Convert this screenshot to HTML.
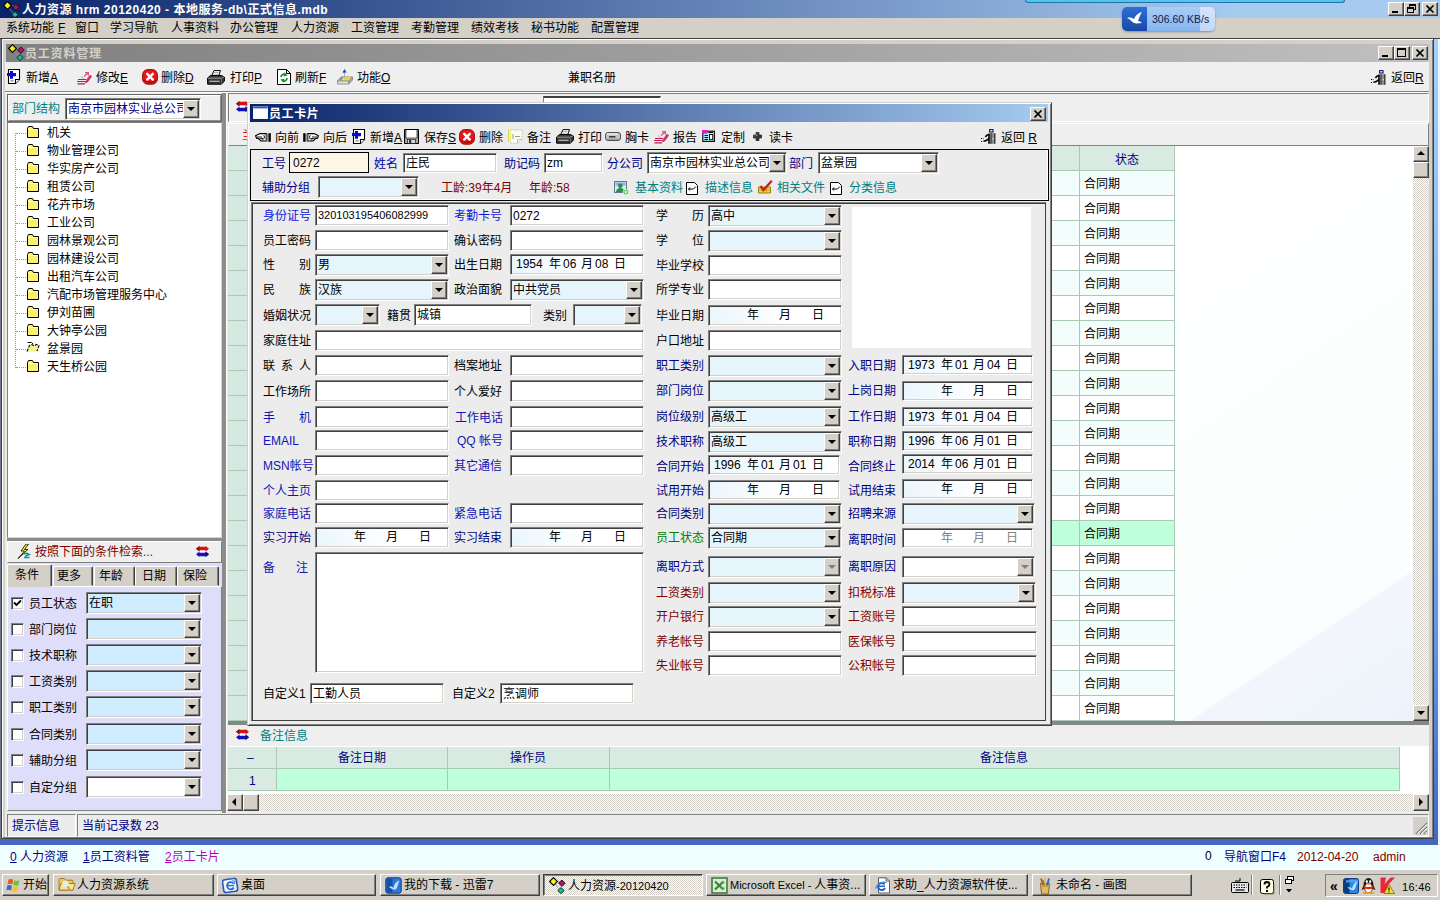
<!DOCTYPE html>
<html lang="zh-CN"><head><meta charset="utf-8"><title>人力资源 hrm</title>
<style>
*{box-sizing:border-box}
html,body{margin:0;padding:0}
body{width:1440px;height:900px;overflow:hidden;position:relative;background:#d4d0c8;font:12px/16px "Liberation Sans","Noto Sans CJK SC",sans-serif;color:#000}
div,span.t,span.dt,i,svg{position:absolute}
.t{white-space:nowrap;line-height:16px;height:16px}
.sk{border:1px solid;border-color:#808080 #fff #fff #808080;box-shadow:inset 1px 1px 0 #404040,inset -1px -1px 0 #d4d0c8;overflow:hidden}
.sk1{border:1px solid;border-color:#808080 #fff #fff #808080}
.rs{border:1px solid;border-color:#fff #404040 #404040 #fff;box-shadow:inset -1px -1px 0 #808080,inset 1px 1px 0 #d4d0c8;background:#d4d0c8}
.rs1{border:1px solid;border-color:#fff #808080 #808080 #fff}
.v{position:absolute;left:2px;top:0;height:100%;display:flex;align-items:center;white-space:nowrap}
.dt{top:0;line-height:18px;white-space:nowrap}
.cb{right:1px;top:1px;border:1px solid;border-color:#fff #404040 #404040 #fff;box-shadow:inset -1px -1px 0 #808080,inset 1px 1px 0 #d4d0c8;background:#d4d0c8}
.ar{left:50%;top:50%;margin:-2px 0 0 -4px;width:0;height:0;border:4px solid transparent;border-bottom:0;border-top:4px solid #000}
.n{font-size:11px}
u{text-decoration:underline}
.wb{border:1px solid;border-color:#fff #404040 #404040 #fff;box-shadow:inset -1px -1px 0 #808080;background:#d4d0c8}
.g{border-right:1px solid #a9c9b4;border-bottom:1px solid #a9c9b4}
.tb{border:1px solid;border-color:#fff #404040 #404040 #fff;box-shadow:inset -1px -1px 0 #808080;background:#d4d0c8;white-space:nowrap;overflow:hidden;line-height:20px;font-size:12px}
.hatch{background-color:#fff;background-image:linear-gradient(45deg,#d4d0c8 25%,transparent 25%,transparent 75%,#d4d0c8 75%),linear-gradient(45deg,#d4d0c8 25%,transparent 25%,transparent 75%,#d4d0c8 75%);background-size:2px 2px;background-position:0 0,1px 1px}
</style></head>
<body>
<div style="left:0px;top:0px;width:1440px;height:18px;background:linear-gradient(90deg,#0a246a 0%,#a6caf0 86%,#a6caf0 100%);"></div>
<svg style="left:3px;top:1px" width="17" height="17" viewBox="0 0 17 17"><path d="M5 6 L10 12 M9 4 L11.5 5.5" stroke="#8090b0" stroke-width=".8" fill="none"/><path d="M0.6 4.5 L4.5 0.6 L8.4 4.5 L4.5 8.4Z" fill="#f4f420" stroke="#000" stroke-width="1.1"/><path d="M9.6 6.2 L13 3 L16.2 6.2 L13 9.4Z" fill="#a81860" stroke="#300018" stroke-width=".9"/><path d="M8.8 13.6 L12 10.6 L15.2 13.6 L12 16.6Z" fill="#20b898" stroke="#002818" stroke-width=".9"/></svg>
<span class="t" style="left:22px;top:2px;color:#fff;font-weight:bold;font-size:12px;letter-spacing:0.5px">人力资源 hrm 20120420 - 本地服务-db\正式信息.mdb</span>
<div style="left:1025px;top:0px;width:320px;height:3px;background:#5cc0ee;border-bottom:1px solid #1878a8;border-left:1px solid #1878a8;border-right:1px solid #1878a8;border-radius:0 0 3px 3px"></div>
<div class="wb" style="left:1388px;top:2px;width:16px;height:14px;"><div style="left:3px;top:8px;width:6px;height:2px;background:#000"></div></div>
<div class="wb" style="left:1404px;top:2px;width:16px;height:14px;"><div style="left:4px;top:1px;width:7px;height:6px;border:1px solid #000;border-top-width:2px"></div><div style="left:2px;top:4px;width:7px;height:6px;border:1px solid #000;border-top-width:2px;background:#d4d0c8"></div></div>
<div class="wb" style="left:1422px;top:2px;width:16px;height:14px;"><svg style="left:3px;top:2px" width="9" height="8" viewBox="0 0 9 8"><path d="M0.5 0.5 L7.5 7.5 M7.5 0.5 L0.5 7.5" stroke="#000" stroke-width="1.6"/></svg></div>
<div style="left:0px;top:18px;width:1440px;height:20px;background:#d4d0c8;"></div>
<span class="t" style="left:6px;top:20px;">系统功能<u style="margin-left:4px">F</u></span>
<span class="t" style="left:75px;top:20px;">窗口</span>
<span class="t" style="left:110px;top:20px;">学习导航</span>
<span class="t" style="left:171px;top:20px;">人事资料</span>
<span class="t" style="left:230px;top:20px;">办公管理</span>
<span class="t" style="left:291px;top:20px;">人力资源</span>
<span class="t" style="left:351px;top:20px;">工资管理</span>
<span class="t" style="left:411px;top:20px;">考勤管理</span>
<span class="t" style="left:471px;top:20px;">绩效考核</span>
<span class="t" style="left:531px;top:20px;">秘书功能</span>
<span class="t" style="left:591px;top:20px;">配置管理</span>
<div style="left:1122px;top:7px;width:93px;height:24px;border-radius:5px;background:linear-gradient(180deg,#b9d6f7,#9cc4f3);box-shadow:0 1px 2px rgba(60,80,120,.5);overflow:hidden"><div style="left:0px;top:0px;width:25px;height:24px;background:linear-gradient(180deg,#2d6fd6,#1848a8)"><svg style="left:4px;top:4px" width="18" height="16" viewBox="0 0 18 16"><path d="M1 7 C4 6 6 7 8 8 C9 5 12 2 16 1 C14 4 13 7 12 10 C14 10 15 11 16 12 C13 12 10 13 8 12 C6 11 4 8 1 7Z" fill="#fff"/></svg></div><div style="left:25px;top:0px;width:53px;height:24px;background:linear-gradient(180deg,#a9cdf6,#86b5ee)"></div><div style="left:78px;top:0px;width:15px;height:24px;background:linear-gradient(180deg,#d6e4f9,#c3d8f6)"></div><span class="t" style="left:30px;top:4px;font-size:10.5px;color:#102050;letter-spacing:0">306.60 KB/s</span></div>
<div style="left:0px;top:38px;width:1440px;height:807px;background:linear-gradient(180deg,#a6d0f8 0%,#88b6f0 40%,#6494e2 75%,#4468c0 100%);"></div>
<div style="left:1438px;top:38px;width:2px;height:807px;background:#e8f4ff"></div>
<div style="left:1px;top:38px;width:1433px;height:801px;background:#d4d0c8;border:1px solid;border-color:#d4d0c8 #404040 #404040 #d4d0c8;box-shadow:inset 1px 1px 0 #fff,inset -1px -1px 0 #808080"></div>
<div style="left:0px;top:38px;width:1440px;height:1px;background:#404040"></div>
<div style="left:0px;top:39px;width:1px;height:800px;background:#70788c"></div>
<div style="left:1px;top:39px;width:1px;height:800px;background:#404040"></div>
<div style="left:6px;top:44px;width:1423px;height:18px;background:linear-gradient(90deg,#808080,#c0c0c0);"></div>
<svg style="left:8px;top:44px" width="17" height="17" viewBox="0 0 17 17"><path d="M5 6 L10 12 M9 4 L11.5 5.5" stroke="#8090b0" stroke-width=".8" fill="none"/><path d="M0.6 4.5 L4.5 0.6 L8.4 4.5 L4.5 8.4Z" fill="#f4f420" stroke="#000" stroke-width="1.1"/><path d="M9.6 6.2 L13 3 L16.2 6.2 L13 9.4Z" fill="#a81860" stroke="#300018" stroke-width=".9"/><path d="M8.8 13.6 L12 10.6 L15.2 13.6 L12 16.6Z" fill="#20b898" stroke="#002818" stroke-width=".9"/></svg>
<span class="t" style="left:25px;top:46px;color:#d4d0c8;font-weight:bold;font-size:12px;letter-spacing:0.8px">员工资料管理</span>
<div class="wb" style="left:1378px;top:46px;width:16px;height:14px;"><div style="left:3px;top:8px;width:6px;height:2px;background:#000"></div></div>
<div class="wb" style="left:1394px;top:46px;width:16px;height:14px;"><div style="left:2px;top:1px;width:9px;height:9px;border:1px solid #000;border-top-width:2px"></div></div>
<div class="wb" style="left:1412px;top:46px;width:16px;height:14px;"><svg style="left:3px;top:2px" width="9" height="8" viewBox="0 0 9 8"><path d="M0.5 0.5 L7.5 7.5 M7.5 0.5 L0.5 7.5" stroke="#000" stroke-width="1.6"/></svg></div>
<div style="left:5px;top:62px;width:1424px;height:774px;background:#ececec;"></div>
<div style="left:5px;top:62px;width:1424px;height:30px;background:#efefef;border-bottom:1px solid #808080;"></div>
<div style="left:5px;top:92px;width:1424px;height:1px;background:#fff"></div>
<svg style="left:7px;top:69px" width="14" height="16" viewBox="0 0 14 16"><path d="M1.5 0.5 H12.5 V10.5 L8.5 14.5 H1.5Z" fill="#fff" stroke="#000" stroke-width="1.1"/><path d="M8.5 14.5 V10.5 H12.5" fill="#fff" stroke="#000" stroke-width="1.1"/><rect x="3.5" y="11" width="3" height="1.5" fill="#88a878"/><path d="M3 2 H6 V4 H9 V7 H6 V9.7 H3 V7 H0 V4 H3Z" fill="#0808d8"/><path d="M6 7 H8.5 V8 H6Z" fill="#a8b0c8"/></svg>
<span class="t" style="left:26px;top:70px;">新增<u>A</u></span>
<svg style="left:77px;top:71px" width="15" height="14" viewBox="0 0 15 14"><path d="M1 8.5 H9 M0 10.5 H8.5 M0.5 12.8 H8" stroke="#c01848" stroke-width="1.2"/><path d="M8.5 12 L9.5 9 L13 4.2 L14.6 5.4 L11 10.5Z" fill="#e03868" stroke="#a01040" stroke-width=".6"/><path d="M8 1 H12 V4.6 H10.6 V3 L7.6 6 L6.6 5 L9.6 2.2 H8Z" fill="#e85080"/><path d="M4 5.5 L6.5 7.5" stroke="#e890a8" stroke-width="1"/></svg>
<span class="t" style="left:96px;top:70px;">修改<u>E</u></span>
<svg style="left:142px;top:69px" width="16" height="16" viewBox="0 0 16 16"><rect x="0.6" y="0.6" width="14.8" height="14.6" rx="5.2" fill="#e81818" stroke="#a00808" stroke-width="1"/><path d="M1.5 10 Q8 15.5 14.5 10 L14 12 Q8 16.5 2 12Z" fill="#b00808"/><path d="M5.2 4.8 L10.8 10.6 M10.8 4.8 L5.2 10.6" stroke="#fff" stroke-width="2.4" stroke-linecap="round"/></svg>
<span class="t" style="left:161px;top:70px;">删除<u>D</u></span>
<svg style="left:207px;top:70px" width="18" height="15" viewBox="0 0 18 15"><path d="M4.5 6 L7 0.6 H13.5 L11.5 6Z" fill="#fff" stroke="#000" stroke-width="1"/><path d="M7 2.5 H11.5 M6.3 4.2 H10.8" stroke="#909090" stroke-width=".7"/><path d="M0.6 8 L3.5 5.5 H14.5 L17.4 7 V11 L14.5 14.2 H0.6Z" fill="#383838" stroke="#000" stroke-width="1"/><path d="M1 8.2 H14.4 L17 6.8" fill="none" stroke="#a8a8a8" stroke-width=".9"/><path d="M2.5 11.3 H12.5" stroke="#b8b8b8" stroke-width="1.2"/><path d="M14.5 8.5 V14" stroke="#707070" stroke-width=".8"/></svg>
<span class="t" style="left:230px;top:70px;">打印<u>P</u></span>
<svg style="left:277px;top:69px" width="14" height="16" viewBox="0 0 14 16"><path d="M0.5 0.5 H9.5 L13.5 4.5 V15.5 H0.5Z" fill="#fff" stroke="#000"/><path d="M9.5 0.5 V4.5 H13.5" fill="none" stroke="#000"/><path d="M4 8 A3 3 0 0 1 8.8 5.8" fill="none" stroke="#109028" stroke-width="1.7"/><path d="M7.4 3.4 L10.6 6.6 L6.6 7.4Z" fill="#109028"/><path d="M10 9 A3 3 0 0 1 5.2 11.4" fill="none" stroke="#109028" stroke-width="1.7"/><path d="M6.6 13.8 L3.4 10.6 L7.4 9.8Z" fill="#109028"/></svg>
<span class="t" style="left:295px;top:70px;">刷新<u>F</u></span>
<svg style="left:337px;top:69px" width="16" height="16" viewBox="0 0 16 16"><path d="M7.5 0 L9.5 3.6 H5.5Z" fill="#2040c0"/><path d="M6.4 3 H8.6" stroke="#2040c0" stroke-width="1"/><path d="M7.5 4.5 V7.5" stroke="#5070d0" stroke-width="1" stroke-dasharray="1 1"/><path d="M0.5 12 L4 8 H15.5 L12 12Z" fill="#f4f090" stroke="#707070" stroke-width=".8"/><path d="M8 8.3 L6 11.7 H11.5 L14.5 8.3Z" fill="#f0d830"/><path d="M2 11 L4.5 8.6 H7 L4.5 11Z" fill="#7088d0"/><path d="M0.5 12 H12 V15 H0.5Z" fill="#e0e0e8" stroke="#808080" stroke-width=".8"/><path d="M12 12 L15.5 8 V11 L12 15Z" fill="#b0b0b8" stroke="#808080" stroke-width=".8"/></svg>
<span class="t" style="left:357px;top:70px;">功能<u>O</u></span>
<span class="t" style="left:568px;top:70px;">兼职名册</span>
<svg style="left:1371px;top:70px" width="15" height="15" viewBox="0 0 15 15"><rect x="9.8" y="4.2" width="4.2" height="10.6" fill="#8c8c8c"/><path d="M9.9 4.2 V14.8 M13.9 4.2 V14.8" stroke="#000" stroke-width=".9"/><rect x="11.6" y="9" width="1" height="1.4" fill="#fff"/><rect x="8.6" y="0.6" width="3.4" height="2.4" fill="#fff" stroke="#101070" stroke-width="1.1"/><path d="M8 4.6 V9.2 L6.2 11 M8 9.2 V14.8 M8 5.6 L5.8 6.2 L4.4 8 M6.2 11 L4 12 L2.4 12" stroke="#000" stroke-width="1.6" fill="none" stroke-linejoin="round"/><path d="M0 9.5 H2.4 M0 12.5 H1.4" stroke="#000" stroke-width="1" stroke-dasharray="1 .8"/></svg>
<span class="t" style="left:1391px;top:70px;">返回<u>R</u></span>
<div class="sk1" style="left:7px;top:94px;width:215px;height:28px;background:#efefef;border-color:#808080 #fff #fff #808080;box-shadow:inset 1px 1px 0 #fff, 0 0 0 0 #000"></div>
<div style="left:7px;top:94px;width:215px;height:28px;border:1px solid #686868;"></div>
<div style="left:8px;top:95px;width:213px;height:26px;border:1px solid #fff;border-right-color:#909090;border-bottom-color:#909090"></div>
<span class="t" style="left:12px;top:101px;color:#008080;">部门结构</span>
<div class="sk" style="left:65px;top:98px;width:136px;height:22px;background:#fff;"><span class="v"><span style="color:#000080">南京市园林实业总公司</span></span><div class="cb" style="width:16px;height:18px"><i class="ar" style="border-top-color:#000"></i></div></div>
<div style="left:7px;top:122px;width:215px;height:416px;background:#fff;border:1px solid #808080;border-right-color:#d4d0c8;border-bottom-color:#d4d0c8"></div>
<div style="left:15px;top:133px;width:1px;height:235px;border-left:1px dotted #9a9aa4"></div>
<div style="left:16px;top:133px;width:10px;height:1px;border-top:1px dotted #9a9aa4"></div>
<svg style="left:27px;top:126px" width="13" height="12" viewBox="0 0 13 12"><path d="M0.5 2.5 L1.5 0.5 H5.5 L6.5 2.5 H11.5 V11.5 H0.5Z" fill="#f8f070" stroke="#000" stroke-width="1"/><path d="M1.5 3.5 H10.5" stroke="#fff" stroke-width="1"/></svg>
<span class="t" style="left:47px;top:125px;">机关</span>
<div style="left:16px;top:151px;width:10px;height:1px;border-top:1px dotted #9a9aa4"></div>
<svg style="left:27px;top:144px" width="13" height="12" viewBox="0 0 13 12"><path d="M0.5 2.5 L1.5 0.5 H5.5 L6.5 2.5 H11.5 V11.5 H0.5Z" fill="#f8f070" stroke="#000" stroke-width="1"/><path d="M1.5 3.5 H10.5" stroke="#fff" stroke-width="1"/></svg>
<span class="t" style="left:47px;top:143px;">物业管理公司</span>
<div style="left:16px;top:169px;width:10px;height:1px;border-top:1px dotted #9a9aa4"></div>
<svg style="left:27px;top:162px" width="13" height="12" viewBox="0 0 13 12"><path d="M0.5 2.5 L1.5 0.5 H5.5 L6.5 2.5 H11.5 V11.5 H0.5Z" fill="#f8f070" stroke="#000" stroke-width="1"/><path d="M1.5 3.5 H10.5" stroke="#fff" stroke-width="1"/></svg>
<span class="t" style="left:47px;top:161px;">华实房产公司</span>
<div style="left:16px;top:187px;width:10px;height:1px;border-top:1px dotted #9a9aa4"></div>
<svg style="left:27px;top:180px" width="13" height="12" viewBox="0 0 13 12"><path d="M0.5 2.5 L1.5 0.5 H5.5 L6.5 2.5 H11.5 V11.5 H0.5Z" fill="#f8f070" stroke="#000" stroke-width="1"/><path d="M1.5 3.5 H10.5" stroke="#fff" stroke-width="1"/></svg>
<span class="t" style="left:47px;top:179px;">租赁公司</span>
<div style="left:16px;top:205px;width:10px;height:1px;border-top:1px dotted #9a9aa4"></div>
<svg style="left:27px;top:198px" width="13" height="12" viewBox="0 0 13 12"><path d="M0.5 2.5 L1.5 0.5 H5.5 L6.5 2.5 H11.5 V11.5 H0.5Z" fill="#f8f070" stroke="#000" stroke-width="1"/><path d="M1.5 3.5 H10.5" stroke="#fff" stroke-width="1"/></svg>
<span class="t" style="left:47px;top:197px;">花卉市场</span>
<div style="left:16px;top:223px;width:10px;height:1px;border-top:1px dotted #9a9aa4"></div>
<svg style="left:27px;top:216px" width="13" height="12" viewBox="0 0 13 12"><path d="M0.5 2.5 L1.5 0.5 H5.5 L6.5 2.5 H11.5 V11.5 H0.5Z" fill="#f8f070" stroke="#000" stroke-width="1"/><path d="M1.5 3.5 H10.5" stroke="#fff" stroke-width="1"/></svg>
<span class="t" style="left:47px;top:215px;">工业公司</span>
<div style="left:16px;top:241px;width:10px;height:1px;border-top:1px dotted #9a9aa4"></div>
<svg style="left:27px;top:234px" width="13" height="12" viewBox="0 0 13 12"><path d="M0.5 2.5 L1.5 0.5 H5.5 L6.5 2.5 H11.5 V11.5 H0.5Z" fill="#f8f070" stroke="#000" stroke-width="1"/><path d="M1.5 3.5 H10.5" stroke="#fff" stroke-width="1"/></svg>
<span class="t" style="left:47px;top:233px;">园林景观公司</span>
<div style="left:16px;top:259px;width:10px;height:1px;border-top:1px dotted #9a9aa4"></div>
<svg style="left:27px;top:252px" width="13" height="12" viewBox="0 0 13 12"><path d="M0.5 2.5 L1.5 0.5 H5.5 L6.5 2.5 H11.5 V11.5 H0.5Z" fill="#f8f070" stroke="#000" stroke-width="1"/><path d="M1.5 3.5 H10.5" stroke="#fff" stroke-width="1"/></svg>
<span class="t" style="left:47px;top:251px;">园林建设公司</span>
<div style="left:16px;top:277px;width:10px;height:1px;border-top:1px dotted #9a9aa4"></div>
<svg style="left:27px;top:270px" width="13" height="12" viewBox="0 0 13 12"><path d="M0.5 2.5 L1.5 0.5 H5.5 L6.5 2.5 H11.5 V11.5 H0.5Z" fill="#f8f070" stroke="#000" stroke-width="1"/><path d="M1.5 3.5 H10.5" stroke="#fff" stroke-width="1"/></svg>
<span class="t" style="left:47px;top:269px;">出租汽车公司</span>
<div style="left:16px;top:295px;width:10px;height:1px;border-top:1px dotted #9a9aa4"></div>
<svg style="left:27px;top:288px" width="13" height="12" viewBox="0 0 13 12"><path d="M0.5 2.5 L1.5 0.5 H5.5 L6.5 2.5 H11.5 V11.5 H0.5Z" fill="#f8f070" stroke="#000" stroke-width="1"/><path d="M1.5 3.5 H10.5" stroke="#fff" stroke-width="1"/></svg>
<span class="t" style="left:47px;top:287px;">汽配市场管理服务中心</span>
<div style="left:16px;top:313px;width:10px;height:1px;border-top:1px dotted #9a9aa4"></div>
<svg style="left:27px;top:306px" width="13" height="12" viewBox="0 0 13 12"><path d="M0.5 2.5 L1.5 0.5 H5.5 L6.5 2.5 H11.5 V11.5 H0.5Z" fill="#f8f070" stroke="#000" stroke-width="1"/><path d="M1.5 3.5 H10.5" stroke="#fff" stroke-width="1"/></svg>
<span class="t" style="left:47px;top:305px;">伊刘苗圃</span>
<div style="left:16px;top:331px;width:10px;height:1px;border-top:1px dotted #9a9aa4"></div>
<svg style="left:27px;top:324px" width="13" height="12" viewBox="0 0 13 12"><path d="M0.5 2.5 L1.5 0.5 H5.5 L6.5 2.5 H11.5 V11.5 H0.5Z" fill="#f8f070" stroke="#000" stroke-width="1"/><path d="M1.5 3.5 H10.5" stroke="#fff" stroke-width="1"/></svg>
<span class="t" style="left:47px;top:323px;">大钟亭公园</span>
<div style="left:16px;top:349px;width:10px;height:1px;border-top:1px dotted #9a9aa4"></div>
<svg style="left:26px;top:341px" width="15" height="13" viewBox="0 0 15 13"><path d="M1 10.5 L3.5 4 H13 L10.5 10.5Z" fill="#f4f48c"/><path d="M1.5 1.5 H5.5 L7 3" fill="none" stroke="#000" stroke-width="1"/><path d="M1 10.5 L3.5 4.5 L6 3.6 L8 4.8 L10.5 3.4 L13 4.6 L11 10" fill="none" stroke="#000" stroke-width="1.1" stroke-dasharray="3 1.2"/></svg>
<span class="t" style="left:47px;top:341px;">盆景园</span>
<div style="left:16px;top:367px;width:10px;height:1px;border-top:1px dotted #9a9aa4"></div>
<svg style="left:27px;top:360px" width="13" height="12" viewBox="0 0 13 12"><path d="M0.5 2.5 L1.5 0.5 H5.5 L6.5 2.5 H11.5 V11.5 H0.5Z" fill="#f8f070" stroke="#000" stroke-width="1"/><path d="M1.5 3.5 H10.5" stroke="#fff" stroke-width="1"/></svg>
<span class="t" style="left:47px;top:359px;">天生桥公园</span>
<div style="left:222px;top:93px;width:4px;height:720px;background:#8c8c8c"></div>
<div style="left:226px;top:93px;width:1px;height:720px;background:#fff"></div>
<div style="left:7px;top:538px;width:215px;height:3px;background:#8c8c8c"></div>
<div style="left:7px;top:541px;width:215px;height:22px;background:#efefef;border:1px solid;border-color:#fff #808080 #808080 #fff"></div>
<svg style="left:17px;top:544px" width="14" height="15" viewBox="0 0 14 15"><path d="M9 0 L4 7 H7.5 L1 14.5 L11 5.5 H7.5 L11.5 0Z" fill="#f8f020" stroke="#000" stroke-width=".8"/><path d="M6 10 Q9 8.5 12 10.5 Q9 11 8 13.5 H12.5" stroke="#1090a0" stroke-width="1.6" fill="none"/></svg>
<span class="t" style="left:35px;top:544px;color:#800000;">按照下面的条件检索...</span>
<svg style="left:196px;top:546px" width="13" height="11" viewBox="0 0 13 11"><rect x="3.4" y="3.6" width="6.4" height="3.6" fill="#fff"/><path d="M0 2.8 L3.4 0 V0.8 H9.6 V0 L13 2.8 L9.6 5.6 V4.2 H3.4 V5.6Z" fill="#d81010"/><path d="M0 2.8 L3.4 0 V5.6Z" fill="#901010"/><path d="M0 8.2 L3.4 5.4 V6.8 H9.6 V5.4 L13 8.2 L9.6 11 V10.2 H3.4 V11Z" fill="#1010c0"/><path d="M13 8.2 L9.6 5.4 V11Z" fill="#101078"/></svg>
<div style="left:7px;top:563px;width:215px;height:24px;background:#dedefa"></div>
<div style="left:53px;top:566px;width:40px;height:20px;background:#d4d0c8;border:1px solid;border-color:#fff #404040 #d4d0c8 #fff;box-shadow:inset -1px 0 0 #808080;border-radius:2px 2px 0 0"></div>
<span class="t" style="left:57px;top:568px;">更多</span>
<div style="left:94px;top:566px;width:41px;height:20px;background:#d4d0c8;border:1px solid;border-color:#fff #404040 #d4d0c8 #fff;box-shadow:inset -1px 0 0 #808080;border-radius:2px 2px 0 0"></div>
<span class="t" style="left:99px;top:568px;">年龄</span>
<div style="left:135px;top:566px;width:42px;height:20px;background:#d4d0c8;border:1px solid;border-color:#fff #404040 #d4d0c8 #fff;box-shadow:inset -1px 0 0 #808080;border-radius:2px 2px 0 0"></div>
<span class="t" style="left:142px;top:568px;">日期</span>
<div style="left:177px;top:566px;width:42px;height:20px;background:#d4d0c8;border:1px solid;border-color:#fff #404040 #d4d0c8 #fff;box-shadow:inset -1px 0 0 #808080;border-radius:2px 2px 0 0"></div>
<span class="t" style="left:183px;top:568px;">保险</span>
<div style="left:7px;top:564px;width:45px;height:23px;background:#d4d0c8;border:1px solid;border-color:#fff #404040 #d4d0c8 #fff;box-shadow:inset -1px 0 0 #808080;border-radius:2px 2px 0 0"></div>
<span class="t" style="left:15px;top:567px;">条件</span>
<div style="left:7px;top:586px;width:215px;height:225px;background:#dedefa;border:1px solid;border-color:#fff #808080 #808080 #fff"></div>
<div style="left:8px;top:586px;width:43px;height:1px;background:#d4d0c8"></div>
<div class="sk" style="left:11px;top:597px;width:13px;height:13px;background:#fff"><svg style="left:1px;top:1px" width="9" height="9" viewBox="0 0 9 9"><path d="M1 3.5 L3.5 6 L8 1.5" stroke="#000" stroke-width="1.8" fill="none"/></svg></div>
<span class="t" style="left:29px;top:596px;">员工状态</span>
<div class="sk" style="left:86px;top:592px;width:116px;height:22px;background:#d0ecff;"><span class="v">在职</span><div class="cb" style="width:16px;height:18px"><i class="ar" style="border-top-color:#000"></i></div></div>
<div class="sk" style="left:11px;top:623px;width:13px;height:13px;background:#fff"></div>
<span class="t" style="left:29px;top:622px;">部门岗位</span>
<div class="sk" style="left:86px;top:618px;width:116px;height:22px;background:#d0ecff;"><div class="cb" style="width:16px;height:18px"><i class="ar" style="border-top-color:#000"></i></div></div>
<div class="sk" style="left:11px;top:649px;width:13px;height:13px;background:#fff"></div>
<span class="t" style="left:29px;top:648px;">技术职称</span>
<div class="sk" style="left:86px;top:644px;width:116px;height:22px;background:#d0ecff;"><div class="cb" style="width:16px;height:18px"><i class="ar" style="border-top-color:#000"></i></div></div>
<div class="sk" style="left:11px;top:675px;width:13px;height:13px;background:#fff"></div>
<span class="t" style="left:29px;top:674px;">工资类别</span>
<div class="sk" style="left:86px;top:670px;width:116px;height:22px;background:#d0ecff;"><div class="cb" style="width:16px;height:18px"><i class="ar" style="border-top-color:#000"></i></div></div>
<div class="sk" style="left:11px;top:701px;width:13px;height:13px;background:#fff"></div>
<span class="t" style="left:29px;top:700px;">职工类别</span>
<div class="sk" style="left:86px;top:696px;width:116px;height:22px;background:#d0ecff;"><div class="cb" style="width:16px;height:18px"><i class="ar" style="border-top-color:#000"></i></div></div>
<div class="sk" style="left:11px;top:728px;width:13px;height:13px;background:#fff"></div>
<span class="t" style="left:29px;top:727px;">合同类别</span>
<div class="sk" style="left:86px;top:723px;width:116px;height:22px;background:#d0ecff;"><div class="cb" style="width:16px;height:18px"><i class="ar" style="border-top-color:#000"></i></div></div>
<div class="sk" style="left:11px;top:754px;width:13px;height:13px;background:#fff"></div>
<span class="t" style="left:29px;top:753px;">辅助分组</span>
<div class="sk" style="left:86px;top:749px;width:116px;height:22px;background:#d0ecff;"><div class="cb" style="width:16px;height:18px"><i class="ar" style="border-top-color:#000"></i></div></div>
<div class="sk" style="left:11px;top:781px;width:13px;height:13px;background:#fff"></div>
<span class="t" style="left:29px;top:780px;">自定分组</span>
<div class="sk" style="left:86px;top:776px;width:116px;height:22px;background:#fff;"><div class="cb" style="width:16px;height:18px"><i class="ar" style="border-top-color:#000"></i></div></div>
<div style="left:5px;top:813px;width:1424px;height:24px;background:#ececec"></div>
<div class="sk1" style="left:7px;top:814px;width:69px;height:23px;background:#ececec"></div>
<span class="t" style="left:12px;top:818px;color:#000080;">提示信息</span>
<div class="sk1" style="left:77px;top:814px;width:1352px;height:23px;background:#ececec"></div>
<span class="t" style="left:82px;top:818px;color:#000080;">当前记录数 23</span>
<div style="left:1413px;top:817px;width:15px;height:18px;background:#d4d0c8"></div>
<svg style="left:1414px;top:821px" width="14" height="14" viewBox="0 0 14 14"><path d="M13 2 L2 13 M13 6 L6 13 M13 10 L10 13" stroke="#808080" stroke-width="1.4"/><path d="M13 3 L3 13 M13 7 L7 13 M13 11 L11 13" stroke="#fff" stroke-width=".8"/></svg>
<div style="left:0px;top:845px;width:1440px;height:24px;background:#f0ffff"></div>
<span class="t" style="left:10px;top:849px;color:#000080;"><u>0</u> 人力资源</span>
<span class="t" style="left:83px;top:849px;color:#000080;"><u>1</u>员工资料管</span>
<span class="t" style="left:165px;top:849px;color:#c000c0;"><u>2</u>员工卡片</span>
<span class="t" style="left:1205px;top:848px;">0</span>
<span class="t" style="left:1224px;top:849px;color:#000080;">导航窗口F4</span>
<span class="t" style="left:1297px;top:849px;color:#800000;">2012-04-20</span>
<span class="t" style="left:1373px;top:849px;color:#800000;">admin</span>
<div style="left:0px;top:869px;width:1440px;height:31px;background:#d4d0c8;border-top:1px solid #fff"></div>
<div class="tb" style="left:2px;top:874px;width:47px;height:22px;"><svg style="left:3px;top:3px" width="15" height="15" viewBox="0 0 15 15"><path d="M2.5 1.5 Q5 0.2 7.2 1.8 L6.2 6.6 Q4 5.2 1.5 6.4Z" fill="#e85820"/><path d="M8.2 2.2 Q10.6 3.6 13.5 2.2 L12.4 7.2 Q9.6 8.4 7.2 7Z" fill="#70c030"/><path d="M1.3 7.6 Q3.8 6.2 6 7.8 L5 12.6 Q2.8 11.2 0.3 12.4Z" fill="#3868e0"/><path d="M7 8.2 Q9.4 9.6 12.2 8.4 L11.2 13.2 Q8.4 14.4 6 13Z" fill="#f8c018"/></svg><span class="t" style="left:20px;top:2px">开始</span></div>
<div class="tb" style="left:53px;top:874px;width:161px;height:22px;"><svg style="left:4px;top:2px" width="18" height="15" viewBox="0 0 18 15"><path d="M1 3 Q1 1.5 2.5 1.5 H6.5 L8 3.2 H14 Q15 3.2 15 4.5 V13 H1Z" fill="#f0c848" stroke="#a07818" stroke-width=".9"/><path d="M1 13 L3 6.5 H17 L15 13Z" fill="#f8e48c" stroke="#a07818" stroke-width=".9"/><circle cx="7.5" cy="7" r="3" fill="#d8f0ff" stroke="#e8e8f0" stroke-width="1"/><path d="M9.5 9.5 L11.5 12" stroke="#c09030" stroke-width="1.4"/></svg><span class="t" style="left:23px;top:2px">人力资源系统</span></div>
<div class="tb" style="left:217px;top:874px;width:159px;height:22px;"><svg style="left:4px;top:2px" width="17" height="17" viewBox="0 0 17 17"><rect x="1" y="2" width="14" height="13" rx="2.5" fill="#f0f6ff" stroke="#2858b8" stroke-width="1.6" transform="rotate(-8 8 8)"/><path d="M11.5 6.5 A3.6 3.6 0 1 0 11.8 10.5" fill="none" stroke="#2868d8" stroke-width="1.8"/><path d="M5 8.6 H12" stroke="#2868d8" stroke-width="1.4"/><path d="M10 3.5 L13 4.5 L12 7.5" stroke="#40a0e8" stroke-width="1.3" fill="none"/></svg><span class="t" style="left:23px;top:2px">桌面</span></div>
<div class="tb" style="left:380px;top:874px;width:160px;height:22px;"><svg style="left:4px;top:2px" width="17" height="17" viewBox="0 0 17 17"><rect x="0.8" y="0.8" width="15.4" height="15.4" rx="2.2" fill="#2c7ad8" stroke="#123c80" stroke-width="1"/><rect x="1.5" y="1.5" width="6" height="14" rx="1" fill="#1450a8"/><path d="M4 10 C6.5 9 7.5 10 8.5 11 C9 7.5 11 4.5 14.5 3.5 C13 6.5 12.6 9.5 11.6 11.6 C9.6 13.8 6.6 12 4 10Z" fill="#c0e0ff"/></svg><span class="t" style="left:23px;top:2px">我的下载 - 迅雷7</span></div>
<div class="hatch" style="left:543px;top:874px;width:160px;height:22px;border:1px solid;border-color:#404040 #fff #fff #404040;box-shadow:inset 1px 1px 0 #808080;white-space:nowrap;overflow:hidden"><svg style="left:5px;top:2px" width="17" height="17" viewBox="0 0 17 17"><path d="M5 6 L10 12 M9 4 L11.5 5.5" stroke="#8090b0" stroke-width=".8" fill="none"/><path d="M0.6 4.5 L4.5 0.6 L8.4 4.5 L4.5 8.4Z" fill="#f4f420" stroke="#000" stroke-width="1.1"/><path d="M9.6 6.2 L13 3 L16.2 6.2 L13 9.4Z" fill="#a81860" stroke="#300018" stroke-width=".9"/><path d="M8.8 13.6 L12 10.6 L15.2 13.6 L12 16.6Z" fill="#20b898" stroke="#002818" stroke-width=".9"/></svg><span class="t" style="left:24px;top:3px">人力资源<span class="n">-20120420</span></span></div>
<div class="tb" style="left:706px;top:874px;width:160px;height:22px;"><svg style="left:4px;top:2px" width="17" height="17" viewBox="0 0 17 17"><rect x="1" y="1" width="15" height="15" fill="#dcecd8" stroke="#3c8038" stroke-width="1.6"/><path d="M4 4.5 L12.5 12.5 M12.5 4.5 L4 12.5" stroke="#2c8830" stroke-width="2.2"/><path d="M9 6 H14 M9 11 H14" stroke="#70a870" stroke-width="1"/></svg><span class="t" style="left:23px;top:2px"><span class="n">Microsoft Excel - </span>人事资...</span></div>
<div class="tb" style="left:869px;top:874px;width:159px;height:22px;"><svg style="left:4px;top:2px" width="17" height="17" viewBox="0 0 17 17"><path d="M4.5 0.8 H12 L15.5 4 V16 H4.5Z" fill="#fff" stroke="#505050" stroke-width=".9"/><path d="M12 0.8 V4 H15.5" fill="none" stroke="#505050" stroke-width=".9"/><path d="M10.6 7.3 A3.6 3.6 0 1 0 11 11" fill="none" stroke="#2060d0" stroke-width="2"/><path d="M3.8 9.2 H11" stroke="#2060d0" stroke-width="1.5"/><path d="M1.5 11.5 Q5 3.5 12.5 5.5" stroke="#3888e0" stroke-width="1.1" fill="none"/></svg><span class="t" style="left:23px;top:2px">求助_人力资源软件使...</span></div>
<div class="tb" style="left:1032px;top:874px;width:160px;height:22px;"><svg style="left:4px;top:2px" width="16" height="18" viewBox="0 0 16 18"><path d="M3.5 6.5 H12.5 L11.5 17 H4.5Z" fill="#e0b868" stroke="#805818" stroke-width=".9"/><path d="M4 1.5 L6.5 9" stroke="#d04830" stroke-width="1.8"/><path d="M8 0.5 V9" stroke="#e8c020" stroke-width="1.6"/><path d="M12 1.5 L10 9" stroke="#3060d0" stroke-width="1.8"/><path d="M6 3 L7.5 9" stroke="#30a848" stroke-width="1.2"/><path d="M3.5 8 H12.5 V10 H3.5Z" fill="#c89848" opacity=".7"/></svg><span class="t" style="left:23px;top:2px">未命名 - 画图</span></div>
<div style="left:1251px;top:875px;width:2px;height:20px;border-left:1px solid #808080;border-right:1px solid #fff"></div>
<div style="left:1279px;top:875px;width:2px;height:20px;border-left:1px solid #808080;border-right:1px solid #fff"></div>
<svg style="left:1231px;top:878px" width="18" height="15" viewBox="0 0 18 15"><path d="M9 0 V3 H4" stroke="#000" fill="none" stroke-width="1"/><rect x="0.5" y="4.5" width="17" height="10" rx="1" fill="#e8e8e8" stroke="#000"/><path d="M2.5 7 H15.5 M2.5 9.5 H15.5" stroke="#000" stroke-dasharray="1.5 1" stroke-width="1.2"/><path d="M4.5 12 H13.5" stroke="#000" stroke-width="1.2"/></svg>
<svg style="left:1260px;top:879px" width="17" height="17" viewBox="0 0 17 17"><rect x="0.5" y="0.5" width="13" height="14" rx="2" fill="#ffffe0" stroke="#000"/><path d="M4.5 5.5 Q4.5 3 7 3 Q9.5 3 9.5 5.5 Q9.5 7 7 8 V9.5" stroke="#000" stroke-width="1.8" fill="none"/><rect x="6" y="11" width="2" height="2" fill="#000"/><path d="M14 5 V15 H4" stroke="#808080" fill="none"/></svg>
<svg style="left:1284px;top:876px" width="12" height="20" viewBox="0 0 12 20"><rect x="3.5" y="0.5" width="6" height="4" fill="#fff" stroke="#000"/><rect x="1.5" y="3.5" width="6" height="4" fill="#fff" stroke="#000"/><path d="M2 13 H8 L5 16.5Z" fill="#000"/></svg>
<div style="left:1325px;top:874px;width:113px;height:23px;border:1px solid;border-color:#808080 #fff #fff #808080"></div>
<span class="t" style="left:1330px;top:878px;font-weight:bold;font-size:14px">«</span>
<svg style="left:1343px;top:878px" width="16" height="16" viewBox="0 0 16 16"><rect x="0.5" y="0.5" width="15" height="15" rx="2" fill="#2c84e4" stroke="#0c3c88" stroke-width="1"/><rect x="1" y="1" width="5.5" height="14" rx="1" fill="#0c3c80"/><path d="M3 2 H15 V6 Q9 3 3 5Z" fill="#58b0f8" opacity=".7"/><path d="M4.5 9.5 C7 8.6 8 9.6 9 10.6 C9.6 7.4 11.4 4.6 14.6 3.6 C13.2 6.4 12.8 9.2 11.8 11.2 C10 13.4 7 11.6 4.5 9.5Z" fill="#b8e0ff"/></svg>
<svg style="left:1361px;top:877px" width="15" height="17" viewBox="0 0 15 17"><ellipse cx="7.5" cy="8.5" rx="5" ry="7.5" fill="#181818"/><ellipse cx="7.5" cy="11" rx="3.4" ry="4.4" fill="#fff"/><path d="M2 8.4 Q7.5 11.6 13 8.4 L13.4 10.8 Q7.5 13.6 1.6 10.8Z" fill="#e82020"/><path d="M2.5 9 L0.5 13 L3 12Z M12.5 9 L14.5 13 L12 12Z" fill="#181818"/><ellipse cx="4.5" cy="16" rx="3" ry="1" fill="#f0a010"/><ellipse cx="10.5" cy="16" rx="3" ry="1" fill="#f0a010"/><ellipse cx="5.8" cy="4.6" rx="1.1" ry="1.5" fill="#fff"/><ellipse cx="9.2" cy="4.6" rx="1.1" ry="1.5" fill="#fff"/><ellipse cx="7.5" cy="7" rx="2.2" ry=".9" fill="#f0a010"/></svg>
<svg style="left:1380px;top:877px" width="16" height="17" viewBox="0 0 16 17"><path d="M0.5 0.5 H6 L4.6 7 L10.5 0.5 H15 L7.5 8.5 L10 13 L7 16 H0.5Z" fill="#e82838"/><path d="M4 16.5 L9 7.5 L14.5 16.5Z" fill="#f8e428" stroke="#806800" stroke-width=".8"/><path d="M9 10.6 V13.6 M9 14.6 V15.6" stroke="#000" stroke-width="1.2"/></svg>
<span class="t" style="left:1402px;top:879px;font-size:11px;letter-spacing:.3px">16:46</span>
<div style="left:228px;top:93px;width:1201px;height:29px;background:#efefef;border:1px solid;border-color:#808080 #fff #fff #808080"></div>
<svg style="left:236px;top:101px" width="13" height="11" viewBox="0 0 13 11"><rect x="3.4" y="3.6" width="6.4" height="3.6" fill="#fff"/><path d="M0 2.8 L3.4 0 V0.8 H9.6 V0 L13 2.8 L9.6 5.6 V4.2 H3.4 V5.6Z" fill="#d81010"/><path d="M0 2.8 L3.4 0 V5.6Z" fill="#901010"/><path d="M0 8.2 L3.4 5.4 V6.8 H9.6 V5.4 L13 8.2 L9.6 11 V10.2 H3.4 V11Z" fill="#1010c0"/><path d="M13 8.2 L9.6 5.4 V11Z" fill="#101078"/></svg>
<div style="left:543px;top:96px;width:118px;height:8px;background:#fff;border-top:2px solid #404040;border-left:1px solid #808080;border-right:1px solid #fff"></div>
<div style="left:228px;top:123px;width:1201px;height:23px;background:#efefef;border:1px solid;border-color:#fff #808080 #808080 #fff"></div>
<span class="t" style="left:242px;top:128px;color:#e02020;">兰</span>
<div style="left:228px;top:146px;width:1185px;height:576px;background:#fff;"></div>
<div style="left:1175px;top:146px;width:238px;height:575px;background:linear-gradient(146deg,#fff 0%,#fbfefe 79.3%,#f2f6fc 79.8%,#eef3fb 100%)"></div>
<div class="g" style="left:228px;top:146px;width:22px;height:25px;background:#d9eae2"></div>
<div class="g" style="left:1050px;top:146px;width:30px;height:25px;background:#d9eae2"></div>
<div class="g" style="left:1080px;top:146px;width:95px;height:25px;background:#d9eae2"></div>
<span class="t" style="left:1115px;top:152px;color:#000080;">状态</span>
<div class="g" style="left:228px;top:171px;width:22px;height:25px;background:#d5e9e1"></div>
<div class="g" style="left:1050px;top:171px;width:30px;height:25px;background:#f3fdfc"></div>
<div class="g" style="left:1080px;top:171px;width:95px;height:25px;background:#f3fdfc"></div>
<span class="t" style="left:1084px;top:176px;">合同期</span>
<div class="g" style="left:228px;top:196px;width:22px;height:25px;background:#d5e9e1"></div>
<div class="g" style="left:1050px;top:196px;width:30px;height:25px;background:#fff"></div>
<div class="g" style="left:1080px;top:196px;width:95px;height:25px;background:#fff"></div>
<span class="t" style="left:1084px;top:201px;">合同期</span>
<div class="g" style="left:228px;top:221px;width:22px;height:25px;background:#d5e9e1"></div>
<div class="g" style="left:1050px;top:221px;width:30px;height:25px;background:#f3fdfc"></div>
<div class="g" style="left:1080px;top:221px;width:95px;height:25px;background:#f3fdfc"></div>
<span class="t" style="left:1084px;top:226px;">合同期</span>
<div class="g" style="left:228px;top:246px;width:22px;height:25px;background:#d5e9e1"></div>
<div class="g" style="left:1050px;top:246px;width:30px;height:25px;background:#fff"></div>
<div class="g" style="left:1080px;top:246px;width:95px;height:25px;background:#fff"></div>
<span class="t" style="left:1084px;top:251px;">合同期</span>
<div class="g" style="left:228px;top:271px;width:22px;height:25px;background:#d5e9e1"></div>
<div class="g" style="left:1050px;top:271px;width:30px;height:25px;background:#f3fdfc"></div>
<div class="g" style="left:1080px;top:271px;width:95px;height:25px;background:#f3fdfc"></div>
<span class="t" style="left:1084px;top:276px;">合同期</span>
<div class="g" style="left:228px;top:296px;width:22px;height:25px;background:#d5e9e1"></div>
<div class="g" style="left:1050px;top:296px;width:30px;height:25px;background:#fff"></div>
<div class="g" style="left:1080px;top:296px;width:95px;height:25px;background:#fff"></div>
<span class="t" style="left:1084px;top:301px;">合同期</span>
<div class="g" style="left:228px;top:321px;width:22px;height:25px;background:#d5e9e1"></div>
<div class="g" style="left:1050px;top:321px;width:30px;height:25px;background:#f3fdfc"></div>
<div class="g" style="left:1080px;top:321px;width:95px;height:25px;background:#f3fdfc"></div>
<span class="t" style="left:1084px;top:326px;">合同期</span>
<div class="g" style="left:228px;top:346px;width:22px;height:25px;background:#d5e9e1"></div>
<div class="g" style="left:1050px;top:346px;width:30px;height:25px;background:#fff"></div>
<div class="g" style="left:1080px;top:346px;width:95px;height:25px;background:#fff"></div>
<span class="t" style="left:1084px;top:351px;">合同期</span>
<div class="g" style="left:228px;top:371px;width:22px;height:25px;background:#d5e9e1"></div>
<div class="g" style="left:1050px;top:371px;width:30px;height:25px;background:#f3fdfc"></div>
<div class="g" style="left:1080px;top:371px;width:95px;height:25px;background:#f3fdfc"></div>
<span class="t" style="left:1084px;top:376px;">合同期</span>
<div class="g" style="left:228px;top:396px;width:22px;height:25px;background:#d5e9e1"></div>
<div class="g" style="left:1050px;top:396px;width:30px;height:25px;background:#fff"></div>
<div class="g" style="left:1080px;top:396px;width:95px;height:25px;background:#fff"></div>
<span class="t" style="left:1084px;top:401px;">合同期</span>
<div class="g" style="left:228px;top:421px;width:22px;height:25px;background:#d5e9e1"></div>
<div class="g" style="left:1050px;top:421px;width:30px;height:25px;background:#f3fdfc"></div>
<div class="g" style="left:1080px;top:421px;width:95px;height:25px;background:#f3fdfc"></div>
<span class="t" style="left:1084px;top:426px;">合同期</span>
<div class="g" style="left:228px;top:446px;width:22px;height:25px;background:#d5e9e1"></div>
<div class="g" style="left:1050px;top:446px;width:30px;height:25px;background:#fff"></div>
<div class="g" style="left:1080px;top:446px;width:95px;height:25px;background:#fff"></div>
<span class="t" style="left:1084px;top:451px;">合同期</span>
<div class="g" style="left:228px;top:471px;width:22px;height:25px;background:#d5e9e1"></div>
<div class="g" style="left:1050px;top:471px;width:30px;height:25px;background:#f3fdfc"></div>
<div class="g" style="left:1080px;top:471px;width:95px;height:25px;background:#f3fdfc"></div>
<span class="t" style="left:1084px;top:476px;">合同期</span>
<div class="g" style="left:228px;top:496px;width:22px;height:25px;background:#d5e9e1"></div>
<div class="g" style="left:1050px;top:496px;width:30px;height:25px;background:#fff"></div>
<div class="g" style="left:1080px;top:496px;width:95px;height:25px;background:#fff"></div>
<span class="t" style="left:1084px;top:501px;">合同期</span>
<div class="g" style="left:228px;top:521px;width:22px;height:25px;background:#d5e9e1"></div>
<div class="g" style="left:1050px;top:521px;width:30px;height:25px;background:#bfffdc"></div>
<div class="g" style="left:1080px;top:521px;width:95px;height:25px;background:#bfffdc"></div>
<span class="t" style="left:1084px;top:526px;">合同期</span>
<div class="g" style="left:228px;top:546px;width:22px;height:25px;background:#d5e9e1"></div>
<div class="g" style="left:1050px;top:546px;width:30px;height:25px;background:#fff"></div>
<div class="g" style="left:1080px;top:546px;width:95px;height:25px;background:#fff"></div>
<span class="t" style="left:1084px;top:551px;">合同期</span>
<div class="g" style="left:228px;top:571px;width:22px;height:25px;background:#d5e9e1"></div>
<div class="g" style="left:1050px;top:571px;width:30px;height:25px;background:#f3fdfc"></div>
<div class="g" style="left:1080px;top:571px;width:95px;height:25px;background:#f3fdfc"></div>
<span class="t" style="left:1084px;top:576px;">合同期</span>
<div class="g" style="left:228px;top:596px;width:22px;height:25px;background:#d5e9e1"></div>
<div class="g" style="left:1050px;top:596px;width:30px;height:25px;background:#fff"></div>
<div class="g" style="left:1080px;top:596px;width:95px;height:25px;background:#fff"></div>
<span class="t" style="left:1084px;top:601px;">合同期</span>
<div class="g" style="left:228px;top:621px;width:22px;height:25px;background:#d5e9e1"></div>
<div class="g" style="left:1050px;top:621px;width:30px;height:25px;background:#f3fdfc"></div>
<div class="g" style="left:1080px;top:621px;width:95px;height:25px;background:#f3fdfc"></div>
<span class="t" style="left:1084px;top:626px;">合同期</span>
<div class="g" style="left:228px;top:646px;width:22px;height:25px;background:#d5e9e1"></div>
<div class="g" style="left:1050px;top:646px;width:30px;height:25px;background:#fff"></div>
<div class="g" style="left:1080px;top:646px;width:95px;height:25px;background:#fff"></div>
<span class="t" style="left:1084px;top:651px;">合同期</span>
<div class="g" style="left:228px;top:671px;width:22px;height:25px;background:#d5e9e1"></div>
<div class="g" style="left:1050px;top:671px;width:30px;height:25px;background:#f3fdfc"></div>
<div class="g" style="left:1080px;top:671px;width:95px;height:25px;background:#f3fdfc"></div>
<span class="t" style="left:1084px;top:676px;">合同期</span>
<div class="g" style="left:228px;top:696px;width:22px;height:25px;background:#d5e9e1"></div>
<div class="g" style="left:1050px;top:696px;width:30px;height:25px;background:#fff"></div>
<div class="g" style="left:1080px;top:696px;width:95px;height:25px;background:#fff"></div>
<span class="t" style="left:1084px;top:701px;">合同期</span>
<div class="hatch" style="left:1413px;top:146px;width:16px;height:575px;"></div>
<div class="rs" style="left:1413px;top:146px;width:16px;height:16px;"><i class="ar" style="border:4px solid transparent;border-top:0;border-bottom:4px solid #000;margin:-3px 0 0 -4px"></i></div>
<div class="rs" style="left:1413px;top:162px;width:16px;height:16px;"></div>
<div class="rs" style="left:1413px;top:705px;width:16px;height:16px;"><i class="ar"></i></div>
<div style="left:228px;top:721px;width:1201px;height:4px;background:#848886"></div>
<div style="left:228px;top:725px;width:1201px;height:22px;background:#efefef"></div>
<svg style="left:236px;top:729px" width="13" height="11" viewBox="0 0 13 11"><rect x="3.4" y="3.6" width="6.4" height="3.6" fill="#fff"/><path d="M0 2.8 L3.4 0 V0.8 H9.6 V0 L13 2.8 L9.6 5.6 V4.2 H3.4 V5.6Z" fill="#d81010"/><path d="M0 2.8 L3.4 0 V5.6Z" fill="#901010"/><path d="M0 8.2 L3.4 5.4 V6.8 H9.6 V5.4 L13 8.2 L9.6 11 V10.2 H3.4 V11Z" fill="#1010c0"/><path d="M13 8.2 L9.6 5.4 V11Z" fill="#101078"/></svg>
<span class="t" style="left:260px;top:728px;color:#008080;">备注信息</span>
<div style="left:228px;top:746px;width:1201px;height:48px;background:#fff"></div>
<div class="g" style="left:228px;top:747px;width:49px;height:22px;background:#d9eae2"></div>
<div class="g" style="left:228px;top:769px;width:49px;height:22px;background:#d9eae2"></div>
<div class="g" style="left:277px;top:747px;width:171px;height:22px;background:#d9eae2"></div>
<div class="g" style="left:277px;top:769px;width:171px;height:22px;background:#bfffdc"></div>
<div class="g" style="left:448px;top:747px;width:162px;height:22px;background:#d9eae2"></div>
<div class="g" style="left:448px;top:769px;width:162px;height:22px;background:#bfffdc"></div>
<div class="g" style="left:610px;top:747px;width:790px;height:22px;background:#d9eae2"></div>
<div class="g" style="left:610px;top:769px;width:790px;height:22px;background:#bfffdc"></div>
<span class="t" style="left:247px;top:750px;color:#000080;">–</span>
<span class="t" style="left:338px;top:750px;color:#000080;">备注日期</span>
<span class="t" style="left:510px;top:750px;color:#000080;">操作员</span>
<span class="t" style="left:980px;top:750px;color:#000080;">备注信息</span>
<span class="t" style="left:249px;top:773px;color:#000080;">1</span>
<div class="hatch" style="left:227px;top:794px;width:1202px;height:17px;"></div>
<div class="rs" style="left:227px;top:794px;width:16px;height:17px;"><i style="left:4px;top:3px;width:0;height:0;border:4px solid transparent;border-left:0;border-right:4px solid #000"></i></div>
<div class="rs" style="left:243px;top:794px;width:16px;height:17px;"></div>
<div class="rs" style="left:1413px;top:794px;width:16px;height:17px;"><i style="left:5px;top:3px;width:0;height:0;border:4px solid transparent;border-right:0;border-left:4px solid #000"></i></div>
<div style="left:247px;top:102px;width:805px;height:624px;background:#ececec;border:1px solid;border-color:#d4d0c8 #404040 #404040 #d4d0c8;box-shadow:inset 1px 1px 0 #fff,inset -1px -1px 0 #808080"></div>
<div style="left:250px;top:104px;width:798px;height:18px;background:linear-gradient(90deg,#0a246a,#a6caf0)"></div>
<svg style="left:253px;top:106px" width="15" height="13" viewBox="0 0 15 13"><rect x="0" y="0" width="15" height="13" fill="#fdfdfd"/><rect x="0" y="0" width="15" height="2.4" fill="#3058a8"/><rect x="0" y="0" width="15" height="13" fill="none" stroke="#dde4f0" stroke-width=".6"/></svg>
<span class="t" style="left:269px;top:106px;color:#fff;font-weight:bold;font-size:12px;letter-spacing:.6px">员工卡片</span>
<div class="wb" style="left:1030px;top:107px;width:16px;height:14px;"><svg style="left:3px;top:2px" width="9" height="8" viewBox="0 0 9 8"><path d="M0.5 0.5 L7.5 7.5 M7.5 0.5 L0.5 7.5" stroke="#000" stroke-width="1.6"/></svg></div>
<svg style="left:255px;top:133px" width="16" height="9" viewBox="0 0 16 9"><path d="M0.5 2.8 L5 0.6 H11.2 V8 H6 L3.2 5.4 H1.6Z" fill="#fff" stroke="#000" stroke-width="1.1" stroke-linejoin="round"/><path d="M1.5 4 H7 M4.5 5.6 H8.5 M6.5 7 H8.5 M8.8 2.2 Q10.2 4 8.8 6" stroke="#000" stroke-width=".9" fill="none"/><rect x="11.6" y="1" width="1.2" height="7" fill="#fff"/><path d="M12 0.6 V8.4" stroke="#000" stroke-width=".8"/><rect x="13.4" y="0.2" width="2.4" height="8.6" fill="#000"/></svg>
<span class="t" style="left:275px;top:130px;">向前</span>
<svg style="left:303px;top:133px;transform:scaleX(-1)" width="16" height="9" viewBox="0 0 16 9"><path d="M0.5 2.8 L5 0.6 H11.2 V8 H6 L3.2 5.4 H1.6Z" fill="#fff" stroke="#000" stroke-width="1.1" stroke-linejoin="round"/><path d="M1.5 4 H7 M4.5 5.6 H8.5 M6.5 7 H8.5 M8.8 2.2 Q10.2 4 8.8 6" stroke="#000" stroke-width=".9" fill="none"/><rect x="11.6" y="1" width="1.2" height="7" fill="#fff"/><path d="M12 0.6 V8.4" stroke="#000" stroke-width=".8"/><rect x="13.4" y="0.2" width="2.4" height="8.6" fill="#000"/></svg>
<span class="t" style="left:323px;top:130px;">向后</span>
<svg style="left:352px;top:129px" width="14" height="16" viewBox="0 0 14 16"><path d="M1.5 0.5 H12.5 V10.5 L8.5 14.5 H1.5Z" fill="#fff" stroke="#000" stroke-width="1.1"/><path d="M8.5 14.5 V10.5 H12.5" fill="#fff" stroke="#000" stroke-width="1.1"/><rect x="3.5" y="11" width="3" height="1.5" fill="#88a878"/><path d="M3 2 H6 V4 H9 V7 H6 V9.7 H3 V7 H0 V4 H3Z" fill="#0808d8"/><path d="M6 7 H8.5 V8 H6Z" fill="#a8b0c8"/></svg>
<span class="t" style="left:370px;top:130px;">新增<u>A</u></span>
<svg style="left:404px;top:129px" width="15" height="15" viewBox="0 0 15 15"><path d="M0.5 0.5 H14.5 V14.5 H0.5Z" fill="#606060" stroke="#000" stroke-width="1"/><rect x="2.5" y="1" width="10" height="7.5" fill="#fff"/><rect x="1" y="9.5" width="13" height="4.5" fill="#a8a8a8"/><rect x="3.5" y="10.5" width="8" height="4" fill="#d8d8d8" stroke="#000" stroke-width=".6"/><rect x="5" y="11" width="2.2" height="3" fill="#303030"/></svg>
<span class="t" style="left:424px;top:130px;">保存<u>S</u></span>
<svg style="left:459px;top:129px" width="16" height="16" viewBox="0 0 16 16"><rect x="0.6" y="0.6" width="14.8" height="14.6" rx="5.2" fill="#e81818" stroke="#a00808" stroke-width="1"/><path d="M1.5 10 Q8 15.5 14.5 10 L14 12 Q8 16.5 2 12Z" fill="#b00808"/><path d="M5.2 4.8 L10.8 10.6 M10.8 4.8 L5.2 10.6" stroke="#fff" stroke-width="2.4" stroke-linecap="round"/></svg>
<span class="t" style="left:479px;top:130px;">删除</span>
<svg style="left:508px;top:129px" width="15" height="15" viewBox="0 0 15 15"><path d="M2.5 0.8 H14.2 V10.5 L9.5 14.2 H2.5Z" fill="#fcfcf0" stroke="#b8b8a0" stroke-width=".8" stroke-dasharray="2 1"/><rect x="0.5" y="1" width="2.4" height="11.5" fill="#f8f870"/><path d="M14.2 10.5 H9.5 V14.2" fill="none" stroke="#b0b090" stroke-width=".8"/><path d="M5 5 V10 M7 7.5 H12" stroke="#a0a080" stroke-width="1"/><path d="M0.5 0.5 V13" stroke="#d8d860" stroke-width="1"/></svg>
<span class="t" style="left:527px;top:130px;">备注</span>
<svg style="left:556px;top:129px" width="18" height="15" viewBox="0 0 18 15"><path d="M4.5 6 L7 0.6 H13.5 L11.5 6Z" fill="#fff" stroke="#000" stroke-width="1"/><path d="M7 2.5 H11.5 M6.3 4.2 H10.8" stroke="#909090" stroke-width=".7"/><path d="M0.6 8 L3.5 5.5 H14.5 L17.4 7 V11 L14.5 14.2 H0.6Z" fill="#383838" stroke="#000" stroke-width="1"/><path d="M1 8.2 H14.4 L17 6.8" fill="none" stroke="#a8a8a8" stroke-width=".9"/><path d="M2.5 11.3 H12.5" stroke="#b8b8b8" stroke-width="1.2"/><path d="M14.5 8.5 V14" stroke="#707070" stroke-width=".8"/></svg>
<span class="t" style="left:578px;top:130px;">打印</span>
<svg style="left:605px;top:132px" width="16" height="9" viewBox="0 0 16 9"><rect x="0.5" y="0.5" width="15" height="8" rx="2.5" fill="#c4c4c4" stroke="#505050" stroke-width="1"/><path d="M2 2 H13" stroke="#f4f4f4" stroke-width="1.2"/><path d="M4 4.8 H10.5" stroke="#202020" stroke-width="1.3"/><path d="M2 7.2 H14" stroke="#909090" stroke-width="1"/></svg>
<span class="t" style="left:625px;top:130px;">胸卡</span>
<svg style="left:654px;top:130px" width="15" height="14" viewBox="0 0 15 14"><path d="M1 8.5 H9 M0 10.5 H8.5 M0.5 12.8 H8" stroke="#c01848" stroke-width="1.2"/><path d="M8.5 12 L9.5 9 L13 4.2 L14.6 5.4 L11 10.5Z" fill="#e03868" stroke="#a01040" stroke-width=".6"/><path d="M8 1 H12 V4.6 H10.6 V3 L7.6 6 L6.6 5 L9.6 2.2 H8Z" fill="#e85080"/><path d="M4 5.5 L6.5 7.5" stroke="#e890a8" stroke-width="1"/></svg>
<span class="t" style="left:673px;top:130px;">报告</span>
<svg style="left:702px;top:130px" width="13" height="12" viewBox="0 0 13 12"><rect x="0.8" y="1.2" width="11.6" height="10.2" fill="#a8f0f0" stroke="#000" stroke-width="1.1"/><rect x="0" y="0" width="5.6" height="3.6" fill="#e018d0"/><path d="M2.5 5.5 H6 M2.5 7.5 H6 M2.5 9.5 H6" stroke="#000" stroke-width="1"/><rect x="7.5" y="4.5" width="3.2" height="5.2" fill="#fff" stroke="#000" stroke-width=".9"/><path d="M6.5 2.5 H11" stroke="#000" stroke-width="1"/></svg>
<span class="t" style="left:721px;top:130px;">定制</span>
<svg style="left:753px;top:132px" width="9" height="9" viewBox="0 0 9 9"><path d="M3 0.3 H6 V3 H8.7 V6 H6 V8.7 H3 V6 H0.3 V3 H3Z" fill="#383838" stroke="#181818" stroke-width=".6"/><path d="M4 1.5 V3.8 H1.5" stroke="#888" stroke-width=".9" fill="none"/></svg>
<span class="t" style="left:769px;top:130px;">读卡</span>
<svg style="left:981px;top:129px" width="15" height="15" viewBox="0 0 15 15"><rect x="9.8" y="4.2" width="4.2" height="10.6" fill="#8c8c8c"/><path d="M9.9 4.2 V14.8 M13.9 4.2 V14.8" stroke="#000" stroke-width=".9"/><rect x="11.6" y="9" width="1" height="1.4" fill="#fff"/><rect x="8.6" y="0.6" width="3.4" height="2.4" fill="#fff" stroke="#101070" stroke-width="1.1"/><path d="M8 4.6 V9.2 L6.2 11 M8 9.2 V14.8 M8 5.6 L5.8 6.2 L4.4 8 M6.2 11 L4 12 L2.4 12" stroke="#000" stroke-width="1.6" fill="none" stroke-linejoin="round"/><path d="M0 9.5 H2.4 M0 12.5 H1.4" stroke="#000" stroke-width="1" stroke-dasharray="1 .8"/></svg>
<span class="t" style="left:1001px;top:130px;">返回 <u>R</u></span>
<div style="left:250px;top:149px;width:799px;height:52px;border:1px solid #000;background:#ececec;box-shadow:inset -1px -1px 0 #fff"></div>
<span class="t" style="left:262px;top:156px;color:#000080;">工号</span>
<div style="left:289px;top:152px;width:80px;height:21px;background:#fdf5e6;border:1px solid #000"><span class="v" style="left:3px">0272</span></div>
<span class="t" style="left:374px;top:156px;color:#0000a8;">姓名</span>
<div class="sk" style="left:403px;top:153px;width:94px;height:20px;background:#fff;"><span class="v" style="">庄民</span></div>
<span class="t" style="left:504px;top:156px;color:#000080;">助记码</span>
<div class="sk" style="left:544px;top:153px;width:59px;height:20px;background:#fff;"><span class="v" style="">zm</span></div>
<span class="t" style="left:607px;top:156px;color:#000080;">分公司</span>
<div class="sk" style="left:647px;top:152px;width:140px;height:22px;background:#fff;"><span class="v">南京市园林实业总公司</span><div class="cb" style="width:16px;height:18px"><i class="ar" style="border-top-color:#000"></i></div></div>
<span class="t" style="left:789px;top:156px;color:#000080;">部门</span>
<div class="sk" style="left:818px;top:152px;width:121px;height:22px;background:#fff;"><span class="v">盆景园</span><div class="cb" style="width:16px;height:18px"><i class="ar" style="border-top-color:#000"></i></div></div>
<span class="t" style="left:262px;top:180px;color:#000080;">辅助分组</span>
<div class="sk" style="left:318px;top:176px;width:101px;height:22px;background:#e6f5fc;"><div class="cb" style="width:16px;height:18px"><i class="ar" style="border-top-color:#000"></i></div></div>
<span class="t" style="left:441px;top:180px;color:#800000;">工龄:39年4月</span>
<span class="t" style="left:529px;top:180px;color:#800000;">年龄:58</span>
<svg style="left:614px;top:181px" width="15" height="14" viewBox="0 0 15 14"><rect x="0.5" y="0.5" width="12" height="11" fill="#d8ecf8" stroke="#607890" stroke-width="1"/><rect x="1.5" y="1.5" width="10" height="3" fill="#88b0e0"/><circle cx="6.3" cy="4.8" r="2.3" fill="#289048"/><path d="M2 11 Q2.5 7 6.3 7 Q10 7 10.6 11Z" fill="#289048"/><circle cx="11.8" cy="11" r="2.8" fill="#48c048" stroke="#e8ffe8" stroke-width=".7"/><path d="M10.3 11 H13.3 M11.8 9.5 V12.5" stroke="#fff" stroke-width="1"/></svg>
<span class="t" style="left:635px;top:180px;color:#008080;">基本资料</span>
<svg style="left:686px;top:182px" width="12" height="13" viewBox="0 0 12 13"><path d="M0.5 0.5 H8.5 L11.5 3.5 V12.5 H0.5Z" fill="#fff" stroke="#000" stroke-width="1"/><path d="M10 4.5 L7.5 7 H2.5 M2.5 7 L4.2 5.5 M2.5 7 L4.2 8.5" stroke="#000" stroke-width="1" fill="none"/></svg>
<span class="t" style="left:705px;top:180px;color:#008080;">描述信息</span>
<svg style="left:758px;top:180px" width="15" height="14" viewBox="0 0 15 14"><path d="M0.5 7 H12.5 V13 H0.5Z" fill="#f0d838" stroke="#806800" stroke-width=".8"/><path d="M0.5 10 H12.5 M4.5 7 V13 M8.5 7 V13" stroke="#a08810" stroke-width=".6"/><path d="M2.5 6 L5.5 10 L13.8 0.8" stroke="#d81808" stroke-width="2.2" fill="none"/></svg>
<span class="t" style="left:777px;top:180px;color:#008080;">相关文件</span>
<svg style="left:830px;top:182px" width="12" height="13" viewBox="0 0 12 13"><path d="M0.5 0.5 H8.5 L11.5 3.5 V12.5 H0.5Z" fill="#fff" stroke="#000" stroke-width="1"/><path d="M10 4.5 L7.5 7 H2.5 M2.5 7 L4.2 5.5 M2.5 7 L4.2 8.5" stroke="#000" stroke-width="1" fill="none"/></svg>
<span class="t" style="left:849px;top:180px;color:#008080;">分类信息</span>
<div style="left:251px;top:202px;width:795px;height:519px;background:#ececec;border:1px solid #404040;border-top-color:#808080;border-left-color:#808080;box-shadow:inset 1px 1px 0 #404040"></div>
<span class="t" style="left:263px;top:208px;color:#1018d8;">身份证号</span>
<div class="sk" style="left:315px;top:205px;width:134px;height:21px;background:#fff;"><span class="v" style="font-size:11px;left:2px;letter-spacing:0;margin-top:-1px">320103195406082999</span></div>
<span class="t" style="left:454px;top:208px;color:#1018d8;">考勤卡号</span>
<div class="sk" style="left:510px;top:205px;width:134px;height:21px;background:#fff;"><span class="v" style="">0272</span></div>
<span class="t" style="left:263px;top:233px;">员工密码</span>
<div class="sk" style="left:315px;top:230px;width:134px;height:21px;background:#fff;"></div>
<span class="t" style="left:454px;top:233px;">确认密码</span>
<div class="sk" style="left:510px;top:230px;width:134px;height:21px;background:#fff;"></div>
<span class="t" style="left:263px;top:257px;">性<span style="display:inline-block;width:24px"></span>别</span>
<div class="sk" style="left:315px;top:254px;width:134px;height:22px;background:#e6f5fc;"><span class="v">男</span><div class="cb" style="width:16px;height:18px"><i class="ar" style="border-top-color:#000"></i></div></div>
<span class="t" style="left:454px;top:257px;">出生日期</span>
<div class="sk" style="left:510px;top:254px;width:134px;height:21px;background:linear-gradient(90deg,#eaf6fd,#fff 60%);color:#000;"><span class="dt" style="left:5px">1954</span><span class="dt" style="left:38px">年</span><span class="dt" style="left:52px">06</span><span class="dt" style="left:70px">月</span><span class="dt" style="left:84px">08</span><span class="dt" style="left:103px">日</span></div>
<span class="t" style="left:263px;top:282px;">民<span style="display:inline-block;width:24px"></span>族</span>
<div class="sk" style="left:315px;top:279px;width:134px;height:22px;background:#e6f5fc;"><span class="v">汉族</span><div class="cb" style="width:16px;height:18px"><i class="ar" style="border-top-color:#000"></i></div></div>
<span class="t" style="left:454px;top:282px;">政治面貌</span>
<div class="sk" style="left:510px;top:279px;width:134px;height:22px;background:#e6f5fc;"><span class="v">中共党员</span><div class="cb" style="width:16px;height:18px"><i class="ar" style="border-top-color:#000"></i></div></div>
<span class="t" style="left:263px;top:308px;">婚姻状况</span>
<div class="sk" style="left:315px;top:304px;width:65px;height:22px;background:#e6f5fc;"><div class="cb" style="width:16px;height:18px"><i class="ar" style="border-top-color:#000"></i></div></div>
<span class="t" style="left:387px;top:308px;">籍贯</span>
<div class="sk" style="left:414px;top:304px;width:118px;height:22px;background:#fff;"><span class="v" style="">城镇</span></div>
<span class="t" style="left:543px;top:308px;">类别</span>
<div class="sk" style="left:573px;top:304px;width:69px;height:22px;background:#e6f5fc;"><div class="cb" style="width:16px;height:18px"><i class="ar" style="border-top-color:#000"></i></div></div>
<span class="t" style="left:263px;top:333px;">家庭住址</span>
<div class="sk" style="left:315px;top:330px;width:329px;height:21px;background:#fff;"></div>
<span class="t" style="left:263px;top:358px;">联<span style="display:inline-block;width:6px"></span>系<span style="display:inline-block;width:6px"></span>人</span>
<div class="sk" style="left:315px;top:355px;width:134px;height:21px;background:#fff;"></div>
<span class="t" style="left:454px;top:358px;">档案地址</span>
<div class="sk" style="left:510px;top:355px;width:134px;height:21px;background:#fff;"></div>
<span class="t" style="left:263px;top:384px;">工作场所</span>
<div class="sk" style="left:315px;top:380px;width:134px;height:22px;background:#fff;"></div>
<span class="t" style="left:454px;top:384px;">个人爱好</span>
<div class="sk" style="left:510px;top:380px;width:134px;height:22px;background:#fff;"></div>
<span class="t" style="left:263px;top:410px;color:#1414b4;">手<span style="display:inline-block;width:24px"></span>机</span>
<div class="sk" style="left:315px;top:406px;width:134px;height:22px;background:#fff;"></div>
<span class="t" style="left:455px;top:410px;color:#1414b4;">工作电话</span>
<div class="sk" style="left:510px;top:406px;width:134px;height:22px;background:#fff;"></div>
<span class="t" style="left:263px;top:433px;color:#1414b4;">EMAIL</span>
<div class="sk" style="left:315px;top:430px;width:134px;height:21px;background:#fff;"></div>
<span class="t" style="left:457px;top:433px;color:#1414b4;">QQ 帐号</span>
<div class="sk" style="left:510px;top:430px;width:134px;height:21px;background:#fff;"></div>
<span class="t" style="left:263px;top:458px;color:#1414b4;">MSN帐号</span>
<div class="sk" style="left:315px;top:455px;width:134px;height:21px;background:#fff;"></div>
<span class="t" style="left:454px;top:458px;color:#1414b4;">其它通信</span>
<div class="sk" style="left:510px;top:455px;width:134px;height:21px;background:#fff;"></div>
<span class="t" style="left:263px;top:483px;color:#1414b4;">个人主页</span>
<div class="sk" style="left:315px;top:480px;width:134px;height:21px;background:#fff;"></div>
<span class="t" style="left:263px;top:506px;color:#1414b4;">家庭电话</span>
<div class="sk" style="left:315px;top:503px;width:134px;height:21px;background:#fff;"></div>
<span class="t" style="left:454px;top:506px;color:#1414b4;">紧急电话</span>
<div class="sk" style="left:510px;top:503px;width:134px;height:21px;background:#fff;"></div>
<span class="t" style="left:263px;top:530px;color:#000080;">实习开始</span>
<div class="sk" style="left:315px;top:527px;width:134px;height:21px;background:linear-gradient(90deg,#eaf6fd,#fff 60%);color:#000;"><span class="dt" style="left:38px">年</span><span class="dt" style="left:70px">月</span><span class="dt" style="left:103px">日</span></div>
<span class="t" style="left:454px;top:530px;color:#000080;">实习结束</span>
<div class="sk" style="left:510px;top:527px;width:134px;height:21px;background:linear-gradient(90deg,#eaf6fd,#fff 60%);color:#000;"><span class="dt" style="left:38px">年</span><span class="dt" style="left:70px">月</span><span class="dt" style="left:103px">日</span></div>
<span class="t" style="left:263px;top:560px;color:#1414b4;">备<span style="display:inline-block;width:21px"></span>注</span>
<div class="sk" style="left:315px;top:552px;width:329px;height:121px;background:#fff;"></div>
<span class="t" style="left:263px;top:686px;">自定义1</span>
<div class="sk" style="left:310px;top:683px;width:134px;height:21px;background:#fff;"><span class="v" style="">工勤人员</span></div>
<span class="t" style="left:452px;top:686px;">自定义2</span>
<div class="sk" style="left:500px;top:683px;width:134px;height:21px;background:#fff;"><span class="v" style="">烹调师</span></div>
<span class="t" style="left:656px;top:208px;">学<span style="display:inline-block;width:24px"></span>历</span>
<div class="sk" style="left:708px;top:205px;width:134px;height:22px;background:#e6f5fc;"><span class="v">高中</span><div class="cb" style="width:16px;height:18px"><i class="ar" style="border-top-color:#000"></i></div></div>
<span class="t" style="left:656px;top:233px;">学<span style="display:inline-block;width:24px"></span>位</span>
<div class="sk" style="left:708px;top:230px;width:134px;height:22px;background:#e6f5fc;"><div class="cb" style="width:16px;height:18px"><i class="ar" style="border-top-color:#000"></i></div></div>
<span class="t" style="left:656px;top:258px;">毕业学校</span>
<div class="sk" style="left:708px;top:255px;width:134px;height:21px;background:#fff;"></div>
<span class="t" style="left:656px;top:282px;">所学专业</span>
<div class="sk" style="left:708px;top:279px;width:134px;height:21px;background:#fff;"></div>
<span class="t" style="left:656px;top:308px;">毕业日期</span>
<div class="sk" style="left:708px;top:305px;width:134px;height:21px;background:linear-gradient(90deg,#eaf6fd,#fff 60%);color:#000;"><span class="dt" style="left:38px">年</span><span class="dt" style="left:70px">月</span><span class="dt" style="left:103px">日</span></div>
<span class="t" style="left:656px;top:333px;">户口地址</span>
<div class="sk" style="left:708px;top:330px;width:134px;height:21px;background:#fff;"></div>
<div style="left:852px;top:207px;width:179px;height:141px;background:#fff"></div>
<span class="t" style="left:656px;top:358px;color:#000080;">职工类别</span>
<div class="sk" style="left:708px;top:355px;width:134px;height:22px;background:#e6f5fc;"><div class="cb" style="width:16px;height:18px"><i class="ar" style="border-top-color:#000"></i></div></div>
<span class="t" style="left:848px;top:358px;color:#000080;">入职日期</span>
<div class="sk" style="left:902px;top:355px;width:131px;height:20px;background:linear-gradient(90deg,#eaf6fd,#fff 60%);color:#000;"><span class="dt" style="left:5px">1973</span><span class="dt" style="left:38px">年</span><span class="dt" style="left:52px">01</span><span class="dt" style="left:70px">月</span><span class="dt" style="left:84px">04</span><span class="dt" style="left:103px">日</span></div>
<span class="t" style="left:656px;top:383px;color:#000080;">部门岗位</span>
<div class="sk" style="left:708px;top:380px;width:134px;height:22px;background:#e6f5fc;"><div class="cb" style="width:16px;height:18px"><i class="ar" style="border-top-color:#000"></i></div></div>
<span class="t" style="left:848px;top:383px;color:#000080;">上岗日期</span>
<div class="sk" style="left:902px;top:381px;width:131px;height:20px;background:linear-gradient(90deg,#eaf6fd,#fff 60%);color:#000;"><span class="dt" style="left:38px">年</span><span class="dt" style="left:70px">月</span><span class="dt" style="left:103px">日</span></div>
<span class="t" style="left:656px;top:409px;color:#000080;">岗位级别</span>
<div class="sk" style="left:708px;top:406px;width:134px;height:22px;background:#e6f5fc;"><span class="v">高级工</span><div class="cb" style="width:16px;height:18px"><i class="ar" style="border-top-color:#000"></i></div></div>
<span class="t" style="left:848px;top:409px;color:#000080;">工作日期</span>
<div class="sk" style="left:902px;top:407px;width:131px;height:20px;background:linear-gradient(90deg,#eaf6fd,#fff 60%);color:#000;"><span class="dt" style="left:5px">1973</span><span class="dt" style="left:38px">年</span><span class="dt" style="left:52px">01</span><span class="dt" style="left:70px">月</span><span class="dt" style="left:84px">04</span><span class="dt" style="left:103px">日</span></div>
<span class="t" style="left:656px;top:434px;color:#000080;">技术职称</span>
<div class="sk" style="left:708px;top:431px;width:134px;height:22px;background:#e6f5fc;"><span class="v">高级工</span><div class="cb" style="width:16px;height:18px"><i class="ar" style="border-top-color:#000"></i></div></div>
<span class="t" style="left:848px;top:434px;color:#000080;">职称日期</span>
<div class="sk" style="left:902px;top:431px;width:131px;height:20px;background:linear-gradient(90deg,#eaf6fd,#fff 60%);color:#000;"><span class="dt" style="left:5px">1996</span><span class="dt" style="left:38px">年</span><span class="dt" style="left:52px">06</span><span class="dt" style="left:70px">月</span><span class="dt" style="left:84px">01</span><span class="dt" style="left:103px">日</span></div>
<span class="t" style="left:656px;top:459px;color:#000080;">合同开始</span>
<div class="sk" style="left:708px;top:455px;width:132px;height:20px;background:linear-gradient(90deg,#eaf6fd,#fff 60%);color:#000;"><span class="dt" style="left:5px">1996</span><span class="dt" style="left:38px">年</span><span class="dt" style="left:52px">01</span><span class="dt" style="left:70px">月</span><span class="dt" style="left:84px">01</span><span class="dt" style="left:103px">日</span></div>
<span class="t" style="left:848px;top:459px;color:#000080;">合同终止</span>
<div class="sk" style="left:902px;top:454px;width:131px;height:20px;background:linear-gradient(90deg,#eaf6fd,#fff 60%);color:#000;"><span class="dt" style="left:5px">2014</span><span class="dt" style="left:38px">年</span><span class="dt" style="left:52px">06</span><span class="dt" style="left:70px">月</span><span class="dt" style="left:84px">01</span><span class="dt" style="left:103px">日</span></div>
<span class="t" style="left:656px;top:483px;color:#000080;">试用开始</span>
<div class="sk" style="left:708px;top:480px;width:132px;height:20px;background:linear-gradient(90deg,#eaf6fd,#fff 60%);color:#000;"><span class="dt" style="left:38px">年</span><span class="dt" style="left:70px">月</span><span class="dt" style="left:103px">日</span></div>
<span class="t" style="left:848px;top:483px;color:#000080;">试用结束</span>
<div class="sk" style="left:902px;top:479px;width:131px;height:20px;background:linear-gradient(90deg,#eaf6fd,#fff 60%);color:#000;"><span class="dt" style="left:38px">年</span><span class="dt" style="left:70px">月</span><span class="dt" style="left:103px">日</span></div>
<span class="t" style="left:656px;top:506px;color:#000080;">合同类别</span>
<div class="sk" style="left:708px;top:503px;width:134px;height:22px;background:#e6f5fc;"><div class="cb" style="width:16px;height:18px"><i class="ar" style="border-top-color:#000"></i></div></div>
<span class="t" style="left:848px;top:506px;color:#000080;">招聘来源</span>
<div class="sk" style="left:902px;top:503px;width:133px;height:22px;background:#e6f5fc;"><div class="cb" style="width:16px;height:18px"><i class="ar" style="border-top-color:#000"></i></div></div>
<span class="t" style="left:656px;top:530px;color:#008000;">员工状态</span>
<div class="sk" style="left:708px;top:527px;width:134px;height:22px;background:#e6f5fc;"><span class="v">合同期</span><div class="cb" style="width:16px;height:18px"><i class="ar" style="border-top-color:#000"></i></div></div>
<span class="t" style="left:848px;top:532px;color:#000080;">离职时间</span>
<div class="sk" style="left:902px;top:528px;width:131px;height:20px;background:#fff;color:#808080;"><span class="dt" style="left:38px">年</span><span class="dt" style="left:70px">月</span><span class="dt" style="left:103px">日</span></div>
<span class="t" style="left:656px;top:559px;color:#000080;">离职方式</span>
<div class="sk" style="left:708px;top:556px;width:134px;height:22px;background:#e6f5fc;"><div class="cb" style="width:16px;height:18px"><i class="ar" style="border-top-color:#808080"></i></div></div>
<span class="t" style="left:848px;top:559px;color:#000080;">离职原因</span>
<div class="sk" style="left:902px;top:556px;width:133px;height:22px;background:#fff;"><div class="cb" style="width:16px;height:18px"><i class="ar" style="border-top-color:#808080"></i></div></div>
<span class="t" style="left:656px;top:585px;color:#800000;">工资类别</span>
<div class="sk" style="left:708px;top:582px;width:134px;height:22px;background:#e6f5fc;"><div class="cb" style="width:16px;height:18px"><i class="ar" style="border-top-color:#000"></i></div></div>
<span class="t" style="left:848px;top:585px;color:#800000;">扣税标准</span>
<div class="sk" style="left:902px;top:582px;width:134px;height:22px;background:#e6f5fc;"><div class="cb" style="width:16px;height:18px"><i class="ar" style="border-top-color:#000"></i></div></div>
<span class="t" style="left:656px;top:609px;color:#800000;">开户银行</span>
<div class="sk" style="left:708px;top:606px;width:134px;height:22px;background:#e6f5fc;"><div class="cb" style="width:16px;height:18px"><i class="ar" style="border-top-color:#000"></i></div></div>
<span class="t" style="left:848px;top:609px;color:#800000;">工资账号</span>
<div class="sk" style="left:902px;top:606px;width:135px;height:21px;background:#fff;"></div>
<span class="t" style="left:656px;top:634px;color:#800000;">养老帐号</span>
<div class="sk" style="left:708px;top:631px;width:134px;height:21px;background:#fff;"></div>
<span class="t" style="left:848px;top:634px;color:#800000;">医保帐号</span>
<div class="sk" style="left:902px;top:631px;width:135px;height:21px;background:#fff;"></div>
<span class="t" style="left:656px;top:658px;color:#800000;">失业帐号</span>
<div class="sk" style="left:708px;top:655px;width:134px;height:21px;background:#fff;"></div>
<span class="t" style="left:848px;top:658px;color:#800000;">公积帐号</span>
<div class="sk" style="left:902px;top:655px;width:135px;height:21px;background:#fff;"></div>
</body></html>
